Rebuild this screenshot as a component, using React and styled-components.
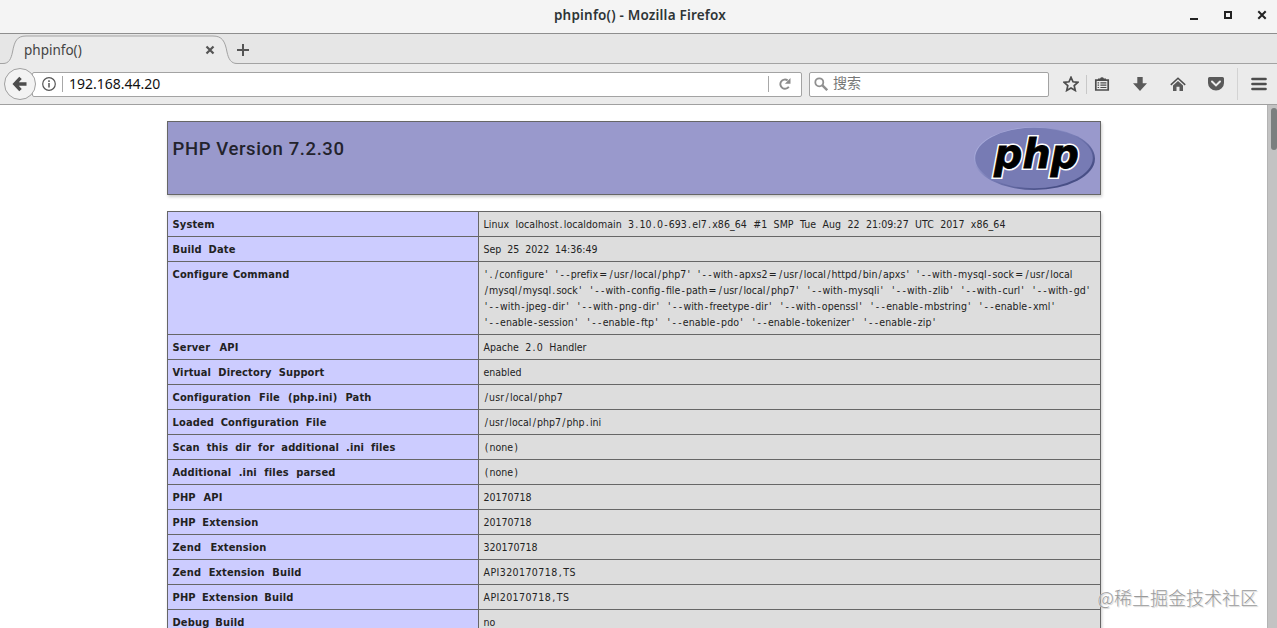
import React from "react";
import styled, { createGlobalStyle } from "styled-components";

const GlobalStyle = createGlobalStyle`
  * {
    box-sizing: border-box;
  }

  body {
    margin: 0;
    background: #fff;
    overflow: hidden;
  }
`;

const uiFont = `"Noto Sans", "Noto Sans CJK SC", sans-serif`;
const pageFont = `"DejaVu Sans Condensed", "DejaVu Sans", sans-serif`;

const Window = styled.div`
  position: relative;
  display: flex;
  flex-direction: column;
  width: 1277px;
  height: 628px;
  overflow: hidden;
  font-family: ${uiFont};
`;

const TitleBar = styled.header`
  display: grid;
  grid-template-columns: 1fr auto 1fr;
  align-items: center;
  height: 34px;
  padding: 0 8px 3px 11px;
  background: #f4f4f4;
  border-bottom: 1px solid #8e8e8e;
`;

const Title = styled.h1`
  grid-column: 2;
  margin: 0;
  font-size: 13.5px;
  font-weight: 600;
  line-height: 18px;
  letter-spacing: 0.2px;
  color: #2e3436;
`;

const WindowButtons = styled.div`
  display: flex;
  justify-content: flex-end;
  gap: 20px;

  svg {
    display: block;
  }
`;

const TabStrip = styled.nav`
  display: flex;
  height: 30px;
  background: #e6e6e6;
  box-shadow: inset 0 -1px #a3a3a3;
`;

const Tab = styled.div`
  position: relative;
  display: flex;
  align-items: center;
  justify-content: space-between;
  width: 237px;
  height: 30px;
  padding: 1px 22px 0 24px;
  font-size: 13.5px;
  color: #444;

  span,
  .close {
    position: relative;
  }
`;

const TabShape = styled.svg`
  position: absolute;
  top: 0;
  left: 0;
`;

const NewTab = styled.button`
  display: flex;
  align-items: center;
  width: 12px;
  height: 32px;
  margin: 0;
  padding: 0;
  border: 0;
  background: none;
`;

const Toolbar = styled.div`
  display: flex;
  align-items: center;
  height: 41px;
  padding: 0 10px 0 4px;
  background: #ebebeb;
  border-bottom: 1px solid #a0a0a0;
`;

const BackButton = styled.button`
  position: relative;
  z-index: 1;
  display: flex;
  align-items: center;
  justify-content: center;
  flex: none;
  width: 32px;
  height: 32px;
  padding: 0;
  border: 1px solid #a0a0a0;
  border-radius: 50%;
  background: #f3f3f3;
`;

const Field = styled.div`
  display: flex;
  align-items: center;
  flex: none;
  width: ${(props) => props.$width}px;
  height: 25px;
  border: 1px solid #a3a3a3;
  border-radius: 2px;
  background: #fff;
`;

const UrlField = styled(Field)`
  margin-left: -4px;
  padding: 0 10px 0 9px;
`;

const Url = styled.span`
  flex: 1;
  padding: 0 0 2px 6px;
  font-size: 14px;
  color: #111;
`;

const SearchField = styled(Field)`
  gap: 5px;
  margin-left: 7px;
  padding-left: 4px;
  color: #777;
`;

const Placeholder = styled.span`
  padding-bottom: 2px;
  font-size: 14px;
  line-height: 20px;
`;

const Divider = styled.i`
  flex: none;
  width: 1px;
  height: ${(props) => props.$height}px;
  margin: ${(props) => props.$margin || 0};
  background: ${(props) => props.$color || "#a8a8a8"};
`;

const Tools = styled.div`
  display: flex;
  align-items: center;
  margin-left: 14px;

  svg {
    display: block;
    flex: none;
  }
`;

const IconRow = styled.div`
  display: flex;
  align-items: center;
  gap: 22px;
`;

const Viewport = styled.main`
  display: flex;
  flex: 1;
  min-height: 0;
  background: #fff;
`;

const Page = styled.div`
  display: flex;
  flex-direction: column;
  align-items: center;
  gap: 16px;
  width: 1267px;
  padding-top: 16px;
  overflow: hidden;
  font-family: ${pageFont};
  color: #222;
`;

const Banner = styled.section`
  display: flex;
  flex: none;
  justify-content: space-between;
  width: 934px;
  height: 74px;
  padding: 4px 5px 0 5px;
  border: 1px solid #666;
  background: #9999cc;
  box-shadow: 1px 2px 3px #ccc;
`;

const Version = styled.h2`
  margin: 12px 0 0;
  font: 500 18.5px/22px Roboto, sans-serif;
  letter-spacing: 0.6px;
  color: #23232c;
`;

const InfoTable = styled.table`
  flex: none;
  width: 934px;
  table-layout: fixed;
  border-collapse: collapse;
  box-shadow: 1px 2px 3px #ccc;
`;

const Label = styled.th`
  width: 311px;
  padding: 5px 5px 3px;
  border: 1px solid #666;
  background: #ccccff;
  font-size: 11px;
  font-weight: bold;
  line-height: 16px;
  text-align: left;
  vertical-align: top;
`;

const Value = styled.td`
  padding: 4px 5px;
  border: 1px solid #666;
  background: #dddddd;
  font-size: 10.5px;
  line-height: 16px;
  vertical-align: top;
`;

// words are spread over the given width, like the wide gaps of a bitmap font
const Line = styled.span`
  display: block;
  width: ${(props) => props.$width}px;
  white-space: nowrap;
  text-align-last: justify;
  letter-spacing: ${(props) => props.$track || 0}px;
`;

const Mark = styled.span`
  padding: 0 1.15px;
`;

const Scrollbar = styled.aside`
  width: 10px;
  padding: 3px 0 0 3px;
  background: #c3c3c3;
  border-left: 1px solid #b3b3b3;
`;

const Thumb = styled.div`
  width: 6px;
  height: 42px;
  border-radius: 4px;
  background: #7b7f7f;
`;

const Watermark = styled.div`
  position: absolute;
  right: 19px;
  bottom: 18px;
  font: 300 18px/26px "Noto Sans CJK SC", sans-serif;
  color: #999;
  text-shadow: 0 0 1px #fff, 1px 1px 1px #ccc;
`;

const rows = [
  {
    label: ["System", 41],
    value: [["Linux localhost.localdomain 3.10.0-693.el7.x86_64 #1 SMP Tue Aug 22 21:09:27 UTC 2017 x86_64", 522, 0.05]],
  },
  { label: ["Build Date", 63], value: [["Sep 25 2022 14:36:49", 114]] },
  {
    label: ["Configure Command", 117],
    value: [
      ["'./configure' '--prefix=/usr/local/php7' '--with-apxs2=/usr/local/httpd/bin/apxs' '--with-mysql-sock=/usr/local", 589, 0.05],
      ["/mysql/mysql.sock' '--with-config-file-path=/usr/local/php7' '--with-mysqli' '--with-zlib' '--with-curl' '--with-gd'", 607],
      ["'--with-jpeg-dir' '--with-png-dir' '--with-freetype-dir' '--with-openssl' '--enable-mbstring' '--enable-xml'", 572, 0.05],
      ["'--enable-session' '--enable-ftp' '--enable-pdo' '--enable-tokenizer' '--enable-zip'", 453, 0.08],
    ],
  },
  { label: ["Server API", 66], value: [["Apache 2.0 Handler", 103]] },
  { label: ["Virtual Directory Support", 152], value: [["enabled", 38]] },
  { label: ["Configuration File (php.ini) Path", 199], value: [["/usr/local/php7", 79, 0.14]] },
  { label: ["Loaded Configuration File", 154], value: [["/usr/local/php7/php.ini", 118, 0.02]] },
  { label: ["Scan this dir for additional .ini files", 223], value: [["(none)", 35]] },
  { label: ["Additional .ini files parsed", 163], value: [["(none)", 35]] },
  { label: ["PHP API", 50], value: [["20170718", 48]] },
  { label: ["PHP Extension", 86], value: [["20170718", 48]] },
  { label: ["Zend Extension", 94], value: [["320170718", 54]] },
  { label: ["Zend Extension Build", 129], value: [["API320170718,TS", 92, 0.42]] },
  { label: ["PHP Extension Build", 121], value: [["API20170718,TS", 86, 0.42]] },
  { label: ["Debug Build", 72], value: [["no", 12]] },
];

const spaceMarks = (text) =>
  text.split(/([-/'.,()=])/).map((part, i) => (i % 2 ? <Mark key={i}>{part}</Mark> : part));

const PhpLogo = () => (
  <svg width="122" height="66" viewBox="0 0 122 66">
    <defs>
      <linearGradient id="rim" x1="0" y1="0" x2="1" y2="1">
        <stop offset="0.2" stopColor="#a9acdb" />
        <stop offset="0.5" stopColor="#7479b3" />
        <stop offset="0.8" stopColor="#484f86" />
      </linearGradient>
    </defs>
    <ellipse cx="61.5" cy="32.5" rx="60.5" ry="31.5" fill="url(#rim)" />
    <ellipse cx="61" cy="32" rx="58.8" ry="30.2" fill="#777bb4" />
    <g
      fontFamily="DejaVu Sans, sans-serif"
      fontSize="40"
      fontWeight="bold"
      fontStyle="italic"
      strokeLinejoin="miter"
    >
      <text x="21" y="41.5" textLength="85" lengthAdjust="spacingAndGlyphs" fill="#fff" stroke="#fff" strokeWidth="4">
        php
      </text>
      <text x="21" y="41.5" textLength="85" lengthAdjust="spacingAndGlyphs" fill="#000" stroke="#000" strokeWidth="0.8">
        php
      </text>
    </g>
  </svg>
);

const App = () => {
  return (
    <>
      <GlobalStyle />
      <Window>
        <TitleBar>
          <Title>phpinfo() - Mozilla Firefox</Title>
          <WindowButtons>
            <svg width="14" height="14" viewBox="0 0 14 14">
              <path d="M3 11h8" stroke="#222" strokeWidth="2" />
            </svg>
            <svg width="14" height="14" viewBox="0 0 14 14">
              <path d="M4 4h6v6h-6z" fill="none" stroke="#222" strokeWidth="2" />
            </svg>
            <svg width="14" height="14" viewBox="0 0 14 14">
              <path d="M3.3 3.3l7.4 7.4M10.7 3.3l-7.4 7.4" stroke="#222" strokeWidth="2" />
            </svg>
          </WindowButtons>
        </TitleBar>

        <TabStrip>
          <Tab>
            <TabShape width="237" height="30" viewBox="0 0 237 30">
              <path
                d="M0 29.5H3C9 29.5 11 25 12.5 18C14.5 7 17 2 26 2H213C222 2 225 7 227 18C228.5 25 231 29.5 237 29.5V30H0Z"
                fill="#ebebeb"
              />
              <path
                d="M0 29.5H3C9 29.5 11 25 12.5 18C14.5 7 17 2 26 2H213C222 2 225 7 227 18C228.5 25 231 29.5 237 29.5"
                fill="none"
                stroke="#a3a3a3"
              />
            </TabShape>
            <span>phpinfo()</span>
            <svg className="close" width="10" height="10" viewBox="0 0 10 10">
              <path d="M1.5 1.5l7 7M8.5 1.5l-7 7" stroke="#555" strokeWidth="2.2" />
            </svg>
          </Tab>
          <NewTab>
            <svg width="12" height="12" viewBox="0 0 12 12">
              <path d="M6 0v12M0 6h12" stroke="#555" strokeWidth="2" />
            </svg>
          </NewTab>
        </TabStrip>

        <Toolbar>
          <BackButton>
            <svg width="16" height="16" viewBox="0 0 16 16">
              <path d="M8.5 1.8L2.8 8l5.7 6.2M3 8h11.5" fill="none" stroke="#4d4d4d" strokeWidth="3.4" />
            </svg>
          </BackButton>
          <UrlField $width={770}>
            <svg width="14" height="14" viewBox="0 0 14 14">
              <circle cx="7" cy="7" r="6.3" fill="none" stroke="#555" strokeWidth="1.2" />
              <path d="M7 6v4.5M7 3.3v1.6" stroke="#555" strokeWidth="1.5" />
            </svg>
            <Divider $height={16} $margin="0 0 0 6px" />
            <Url>192.168.44.20</Url>
            <Divider $height={16} $margin="0 10px 0 0" />
            <svg width="12" height="12" viewBox="0 0 12 12">
              <path d="M9.8 8.7A4.6 4.6 0 1 1 8.6 2.4" fill="none" stroke="#8c8c8c" strokeWidth="1.9" />
              <path d="M11.5 0v5.8H5.9Z" fill="#8c8c8c" />
            </svg>
          </UrlField>
          <SearchField $width={240}>
            <svg width="14" height="14" viewBox="0 0 14 14">
              <circle cx="5.3" cy="5.3" r="4" fill="none" stroke="#909090" strokeWidth="1.8" />
              <path d="M8.2 8.2l5 5" stroke="#909090" strokeWidth="2.4" />
            </svg>
            <Placeholder>搜索</Placeholder>
          </SearchField>
          <Tools>
            <svg width="16" height="16" viewBox="0 0 16 16">
              <path
                d="M8 1.3l2 4.5 4.9.5-3.7 3.3 1.1 4.9L8 12l-4.3 2.5 1.1-4.9L1.1 6.3 6 5.8z"
                fill="none"
                stroke="#4d4d4d"
                strokeWidth="1.7"
              />
            </svg>
            <Divider $height={19} $margin="0 7px" $color="#c8c8c8" />
            <IconRow>
              <svg width="16" height="16" viewBox="0 0 16 16">
                <path d="M1.8 4.2h12.4v9.8H1.8z" fill="none" stroke="#4d4d4d" strokeWidth="1.7" />
                <path d="M4 5V2.6h2.1a2 2 0 0 1 3.8 0H12V5z" fill="#4d4d4d" />
                <path d="M3.6 6.9h1.5M6.4 6.9h6M3.6 9.2h1.5M6.4 9.2h6M3.6 11.5h1.5M6.4 11.5h6" stroke="#4d4d4d" strokeWidth="1.2" />
              </svg>
              <svg width="16" height="16" viewBox="0 0 16 16">
                <path d="M5.3 1h5.4v6.3H15L8 15 1 7.3h4.3z" fill="#5a5a5a" />
              </svg>
              <svg width="16" height="16" viewBox="0 0 16 16">
                <path d="M.8 8.9L8 2.3l7.2 6.6" fill="none" stroke="#4d4d4d" strokeWidth="1.5" />
                <path d="M3 9.6L8 5l5 4.6V15H9.5v-4.2h-3V15H3z" fill="#5a5a5a" />
              </svg>
              <svg width="16" height="16" viewBox="0 0 16 16">
                <path d="M1.5 1h13A1.5 1.5 0 0 1 16 2.5V7A8 7.5 0 0 1 0 7V2.5A1.5 1.5 0 0 1 1.5 1z" fill="#5a5a5a" />
                <path d="M4 5.5l4 3.9 4-3.9" fill="none" stroke="#ebebeb" strokeWidth="2" strokeLinecap="round" />
              </svg>
            </IconRow>
            <Divider $height={32} $margin="0 13px" $color="#d3d3d3" />
            <svg width="16" height="16" viewBox="0 0 16 16">
              <path d="M1.5 3h13M1.5 8h13M1.5 13h13" stroke="#4d4d4d" strokeWidth="2.7" strokeLinecap="round" />
            </svg>
          </Tools>
        </Toolbar>

        <Viewport>
          <Page>
            <Banner>
              <Version>PHP Version 7.2.30</Version>
              <PhpLogo />
            </Banner>
            <InfoTable>
              <tbody>
                {rows.map(({ label, value }) => (
                  <tr key={label[0]}>
                    <Label>
                      <Line $width={label[1]} $track={0.15}>
                        {label[0]}
                      </Line>
                    </Label>
                    <Value>
                      {value.map(([text, width, track]) => (
                        <Line key={text} $width={width} $track={track}>
                          {spaceMarks(text)}
                        </Line>
                      ))}
                    </Value>
                  </tr>
                ))}
              </tbody>
            </InfoTable>
          </Page>
          <Scrollbar>
            <Thumb />
          </Scrollbar>
        </Viewport>
        <Watermark>@稀土掘金技术社区</Watermark>
      </Window>
    </>
  );
};

export default App;
